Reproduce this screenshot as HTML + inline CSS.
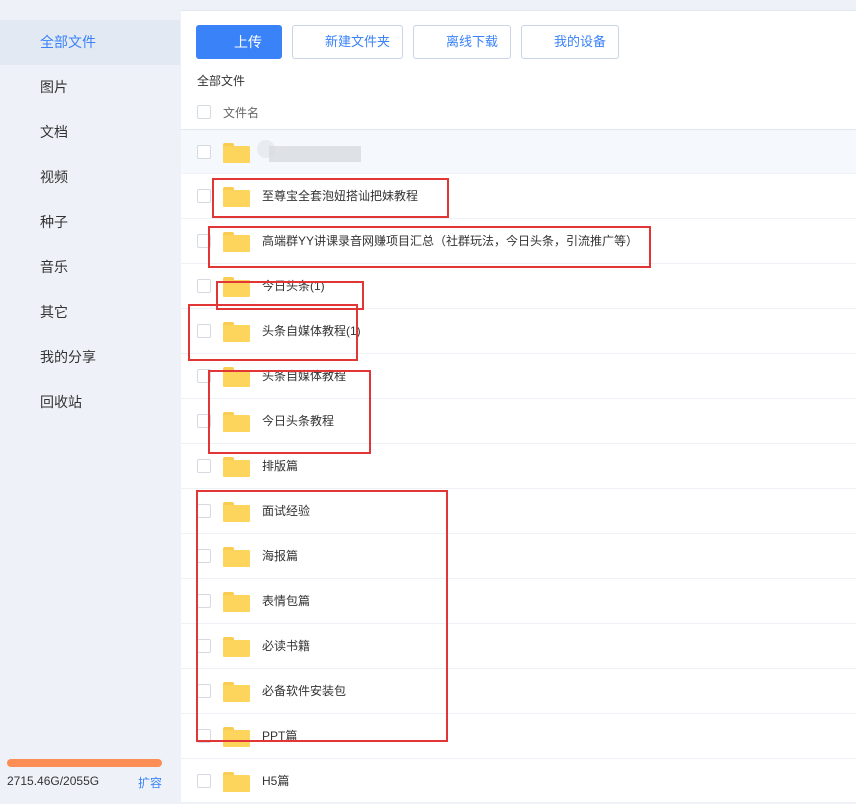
<!DOCTYPE html>
<html><head><meta charset="utf-8"><style>
*{margin:0;padding:0;box-sizing:border-box}
body{width:856px;height:802px;overflow:hidden;background:#eef2f8;font-family:"Liberation Sans","Noto Sans CJK SC",sans-serif;font-size:13px;color:#333;position:relative}
.side div{position:absolute;left:0;width:180px;height:45px;line-height:45px;padding-left:40px;font-size:14px;color:#333}
.side .on{background:#e3e9f3;color:#3a82f8}
.main{position:absolute;left:181px;top:10px;width:675px;height:792px;background:#fff;border-top:1px solid #e3e8f0}
.btn{position:absolute;top:25px;height:34px;border:1px solid #c9d5e6;border-radius:3px;color:#3a82f8;font-size:13px;line-height:32px;text-align:right;padding-right:12px}
.row{position:absolute;left:181px;width:675px;height:45px;border-bottom:1px solid #eef1f5}
.cb{position:absolute;left:16px;top:15px;width:14px;height:14px;border:1px solid #d5d9e0;border-radius:2px;background:#fff}
.fd{position:absolute;left:42px;top:13px;width:27px;height:20px}
.fd:before{content:"";position:absolute;left:0;top:0;width:11px;height:5px;background:#f8cd52;border-radius:2px 2px 0 0}
.fd:after{content:"";position:absolute;left:0;top:3px;width:27px;height:17px;background:#fdd55c;border-radius:1px}
.t{position:absolute;left:81px;top:0;line-height:45px;font-size:12px;color:#333}
.r{position:absolute;border:2px solid #e23636}
</style></head><body>
<div class="side">
<div class="on" style="top:20px">全部文件</div>
<div style="top:65px">图片</div>
<div style="top:110px">文档</div>
<div style="top:155px">视频</div>
<div style="top:200px">种子</div>
<div style="top:245px">音乐</div>
<div style="top:290px">其它</div>
<div style="top:335px">我的分享</div>
<div style="top:380px">回收站</div>
</div>
<div style="position:absolute;left:7px;top:759px;width:155px;height:8px;border-radius:4px;background:#fb8d55"></div>
<div style="position:absolute;left:7px;top:774px;font-size:12px;color:#333">2715.46G/2055G</div>
<div style="position:absolute;left:138px;top:774px;font-size:12px;color:#3a82f8">扩容</div>
<div class="main"></div>
<div class="btn" style="left:196px;width:86px;background:#3a82f8;border-color:#3a82f8;color:#fff;padding-right:19px;font-size:14px">上传</div>
<div class="btn" style="left:292px;width:111px">新建文件夹</div>
<div class="btn" style="left:413px;width:98px">离线下载</div>
<div class="btn" style="left:521px;width:98px">我的设备</div>
<div style="position:absolute;left:197px;top:72px;font-size:12px;color:#333">全部文件</div>
<div style="position:absolute;left:197px;top:105px;width:14px;height:14px;border:1px solid #d5d9e0;border-radius:2px"></div>
<div style="position:absolute;left:223px;top:104px;font-size:12px;color:#666">文件名</div>
<div class="row" style="top:129px;background:#f5f8fc;border-top:1px solid #e3e8f0"><div class="cb"></div><div class="fd"></div>
<div style="position:absolute;left:76px;top:10px;width:18px;height:18px;border-radius:9px;background:#e8ebef"></div>
<div style="position:absolute;left:88px;top:16px;width:92px;height:16px;background:#d8dbe0;opacity:.8"></div></div>
<div class="row" style="top:174px"><div class="cb"></div><div class="fd"></div><div class="t">至尊宝全套泡妞搭讪把妹教程</div></div>
<div class="row" style="top:219px"><div class="cb"></div><div class="fd"></div><div class="t">高端群YY讲课录音网赚项目汇总（社群玩法，今日头条，引流推广等）</div></div>
<div class="row" style="top:264px"><div class="cb"></div><div class="fd"></div><div class="t">今日头条(1)</div></div>
<div class="row" style="top:309px"><div class="cb"></div><div class="fd"></div><div class="t">头条自媒体教程(1)</div></div>
<div class="row" style="top:354px"><div class="cb"></div><div class="fd"></div><div class="t">头条自媒体教程</div></div>
<div class="row" style="top:399px"><div class="cb"></div><div class="fd"></div><div class="t">今日头条教程</div></div>
<div class="row" style="top:444px"><div class="cb"></div><div class="fd"></div><div class="t">排版篇</div></div>
<div class="row" style="top:489px"><div class="cb"></div><div class="fd"></div><div class="t">面试经验</div></div>
<div class="row" style="top:534px"><div class="cb"></div><div class="fd"></div><div class="t">海报篇</div></div>
<div class="row" style="top:579px"><div class="cb"></div><div class="fd"></div><div class="t">表情包篇</div></div>
<div class="row" style="top:624px"><div class="cb"></div><div class="fd"></div><div class="t">必读书籍</div></div>
<div class="row" style="top:669px"><div class="cb"></div><div class="fd"></div><div class="t">必备软件安装包</div></div>
<div class="row" style="top:714px"><div class="cb"></div><div class="fd"></div><div class="t">PPT篇</div></div>
<div class="row" style="top:759px"><div class="cb"></div><div class="fd"></div><div class="t">H5篇</div></div>
<div class="r" style="left:212px;top:178px;width:237px;height:40px"></div>
<div class="r" style="left:208px;top:226px;width:443px;height:42px"></div>
<div class="r" style="left:216px;top:281px;width:148px;height:29px"></div>
<div class="r" style="left:188px;top:304px;width:170px;height:57px"></div>
<div class="r" style="left:208px;top:370px;width:163px;height:84px"></div>
<div class="r" style="left:196px;top:490px;width:252px;height:252px"></div>
</body></html>
